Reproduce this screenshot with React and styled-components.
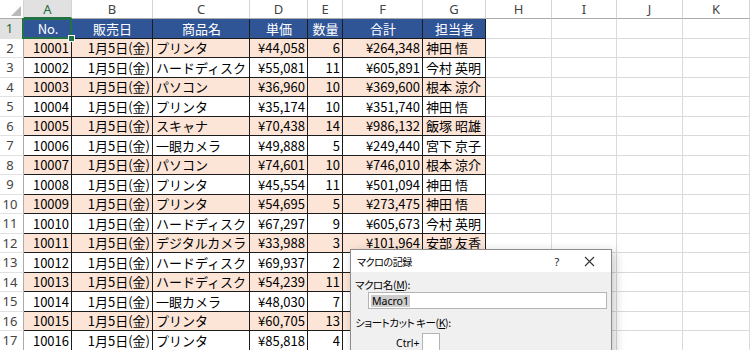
import React from "react";
import styled, { createGlobalStyle } from "styled-components";

const GlobalStyle = createGlobalStyle`
  body {
    margin: 0;
    background: #ffffff;
    overflow: hidden;
  }
`;

const COLS = [24, 48, 81, 97, 58, 35, 80, 63, 66, 65, 66, 67];
const LETTERS = ["A", "B", "C", "D", "E", "F", "G", "H", "I", "J", "K"];
const ALIGN = ["right", "right", "left", "right", "right", "right", "left"];
const HEAD = ["No.", "販売日", "商品名", "単価", "数量", "合計", "担当者"];

const rows = [
  ["10001", "プリンタ", "¥44,058", "6", "¥264,348", "神田 悟"],
  ["10002", "ハードディスク", "¥55,081", "11", "¥605,891", "今村 英明"],
  ["10003", "パソコン", "¥36,960", "10", "¥369,600", "根本 涼介"],
  ["10004", "プリンタ", "¥35,174", "10", "¥351,740", "神田 悟"],
  ["10005", "スキャナ", "¥70,438", "14", "¥986,132", "飯塚 昭雄"],
  ["10006", "一眼カメラ", "¥49,888", "5", "¥249,440", "宮下 京子"],
  ["10007", "パソコン", "¥74,601", "10", "¥746,010", "根本 涼介"],
  ["10008", "プリンタ", "¥45,554", "11", "¥501,094", "神田 悟"],
  ["10009", "プリンタ", "¥54,695", "5", "¥273,475", "神田 悟"],
  ["10010", "ハードディスク", "¥67,297", "9", "¥605,673", "今村 英明"],
  ["10011", "デジタルカメラ", "¥33,988", "3", "¥101,964", "安部 友香"],
  ["10012", "ハードディスク", "¥69,937", "2", "¥139,874", "今村 英明"],
  ["10013", "ハードディスク", "¥54,239", "11", "¥596,629", "今村 英明"],
  ["10014", "一眼カメラ", "¥48,030", "7", "¥336,210", "宮下 京子"],
  ["10015", "プリンタ", "¥60,705", "13", "¥789,165", "神田 悟"],
  ["10016", "プリンタ", "¥85,818", "4", "¥343,272", "神田 悟"],
];

const Page = styled.div`
  position: relative;
  width: 750px;
  height: 350px;
  overflow: hidden;
`;

const Sheet = styled.div`
  display: grid;
  grid-template-columns: ${COLS.map((c) => c + "px").join(" ")};
  grid-template-rows: 19px repeat(17, 19.5px);
  font-family: "Noto Sans CJK JP", "Noto Sans", sans-serif;
`;

const Corner = styled.div`
  box-sizing: border-box;
  display: flex;
  align-items: flex-end;
  justify-content: flex-end;
  padding: 0 2px 2px 0;
  border-right: 1px solid #d4d4d4;
  border-bottom: 1px solid #ababab;
  background: #ffffff;
`;

const ColHead = styled.div`
  box-sizing: border-box;
  display: flex;
  align-items: center;
  justify-content: center;
  font-family: "Noto Sans", sans-serif;
  font-size: 13px;
  color: ${(p) => (p.$selected ? "#1e6b40" : "#444444")};
  background: ${(p) => (p.$selected ? "#e1e1e1" : "#ffffff")};
  border-right: 1px solid #d4d4d4;
  border-bottom: ${(p) =>
    p.$selected ? "2px solid #217346" : "1px solid #ababab"};
`;

const RowHead = styled.div`
  box-sizing: border-box;
  display: flex;
  align-items: center;
  justify-content: center;
  padding-right: 3px;
  font-family: "Noto Sans", sans-serif;
  font-size: 13px;
  color: ${(p) => (p.$selected ? "#1e6b40" : "#444444")};
  background: ${(p) => (p.$selected ? "#e1e1e1" : "#ffffff")};
  border-right: ${(p) =>
    p.$selected ? "2px solid #217346" : "1px solid #ababab"};
  border-bottom: 1px solid #e1e1e1;
`;

const justify = { left: "flex-start", right: "flex-end", center: "center" };

const Cell = styled.div`
  position: relative;
  z-index: ${(p) => (p.$selected ? 2 : "auto")};
  box-sizing: border-box;
  display: flex;
  align-items: center;
  justify-content: ${(p) => justify[p.$align || "left"]};
  padding: 0 2px 0 3px;
  font-size: 13px;
  white-space: nowrap;
  color: ${(p) => (p.$head ? "#ffffff" : "#000000")};
  background: ${(p) =>
    p.$head ? "#2f5597" : p.$alt ? "#fce4d6" : "#ffffff"};
  border-right: 1px solid ${(p) => (p.$table ? "#1c1c1c" : "#dadada")};
  border-bottom: 1px solid ${(p) => (p.$table ? "#1c1c1c" : "#dadada")};

  ${(p) =>
    p.$selected &&
    `
    &::after {
      content: "";
      position: absolute;
      left: -2px;
      top: -1px;
      right: -1px;
      bottom: -1px;
      border: 2px solid #217346;
    }
    &::before {
      content: "";
      position: absolute;
      right: -4px;
      bottom: -4px;
      width: 5px;
      height: 5px;
      background: #217346;
      border: 1px solid #ffffff;
      z-index: 3;
    }
  `}
`;

const Dialog = styled.div`
  position: absolute;
  left: 350px;
  top: 249px;
  width: 262px;
  height: 130px;
  box-sizing: border-box;
  border: 1px solid #8c8c8c;
  background: #f0f0f0;
  box-shadow: 3px 3px 10px rgba(0, 0, 0, 0.22);
  font-family: "Noto Sans CJK JP", sans-serif;
  font-feature-settings: "palt";
  font-size: 10.5px;
  color: #000000;
`;

const TitleBar = styled.div`
  display: flex;
  align-items: center;
  height: 22px;
  padding-left: 6px;
  background: #ffffff;
`;

const Title = styled.div`
  flex: 1;
  font-size: 10px;
  letter-spacing: -0.4px;
`;

const TitleButton = styled.div`
  display: flex;
  align-items: center;
  justify-content: center;
  width: ${(p) => p.$w}px;
  height: 22px;
  font-family: "Noto Sans", sans-serif;
  font-size: 11px;
  color: #222222;
`;

const Body = styled.div`
  padding: 5px 4px 0 4px;
`;

const Label = styled.div`
  line-height: 15px;
  margin-top: ${(p) => p.$top || 0}px;
  letter-spacing: -0.4px;
`;

const NameInput = styled.div`
  box-sizing: border-box;
  display: flex;
  align-items: center;
  height: 17px;
  width: 239px;
  margin: 0 0 0 13px;
  padding-left: 2px;
  background: #ffffff;
  border: 1px solid #b4b4b4;
  font-family: "Noto Sans", sans-serif;
  line-height: 12px;
`;

const Selection = styled.span`
  background: #cdcdcd;
  padding: 0 1px;
`;

const KeyRow = styled.div`
  display: flex;
  align-items: center;
  gap: 3px;
  margin: 3px 0 0 41px;
  font-family: "Noto Sans", sans-serif;
  line-height: 14px;
`;

const KeyBox = styled.div`
  box-sizing: border-box;
  width: 18px;
  height: 19px;
  background: #ffffff;
  border: 1px solid #b4b4b4;
`;

const CloseIcon = () => (
  <svg width="11" height="11" viewBox="0 0 11 11">
    <path d="M1 1 L10 10 M10 1 L1 10" stroke="#333" strokeWidth="1.1" fill="none" />
  </svg>
);

const CornerMark = () => (
  <svg width="10" height="10" viewBox="0 0 10 10">
    <polygon points="10,0 10,10 0,10" fill="#b9b9b9" />
  </svg>
);

const App = () => {
  const body = [];
  for (let r = 1; r <= 17; r++) {
    body.push(
      <RowHead key={"h" + r} $selected={r === 1}>
        {r}
      </RowHead>
    );
    const values =
      r === 1
        ? HEAD
        : (() => {
            const d = rows[r - 2];
            return [d[0], "1月5日(金)", d[1], d[2], d[3], d[4], d[5]];
          })();
    values.forEach((v, c) =>
      body.push(
        <Cell
          key={r + "-" + c}
          $table
          $head={r === 1}
          $alt={r % 2 === 0}
          $align={r === 1 ? "center" : ALIGN[c]}
          $selected={r === 1 && c === 0}
        >
          {v}
        </Cell>
      )
    );
    for (let c = 7; c < 11; c++) {
      body.push(<Cell key={r + "-" + c} />);
    }
  }

  return (
    <Page>
      <GlobalStyle />
      <Sheet>
        <Corner>
          <CornerMark />
        </Corner>
        {LETTERS.map((l) => (
          <ColHead key={l} $selected={l === "A"}>
            {l}
          </ColHead>
        ))}
        {body}
      </Sheet>
      <Dialog>
        <TitleBar>
          <Title>マクロの記録</Title>
          <TitleButton $w={20}>?</TitleButton>
          <TitleButton $w={44}>
            <CloseIcon />
          </TitleButton>
        </TitleBar>
        <Body>
          <Label>
            マクロ名(<u>M</u>):
          </Label>
          <NameInput>
            <Selection>Macro1</Selection>
          </NameInput>
          <Label $top={6}>
            ショートカット キー(<u>K</u>):
          </Label>
          <KeyRow>
            Ctrl+
            <KeyBox />
          </KeyRow>
        </Body>
      </Dialog>
    </Page>
  );
};

export default App;
